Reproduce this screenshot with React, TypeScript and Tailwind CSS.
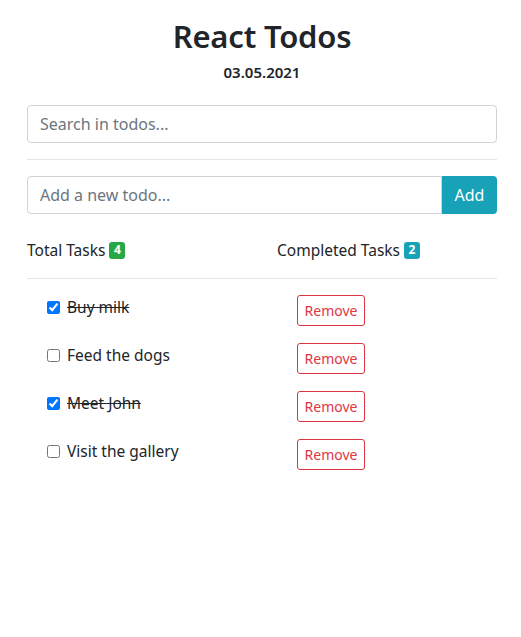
import React from "react";

const todos = [
  { text: "Buy milk", done: true },
  { text: "Feed the dogs", done: false },
  { text: "Meet John", done: true },
  { text: "Visit the gallery", done: false },
];

export default function App() {
  return (
    <div
      className="w-[521px] min-h-[637px] bg-white text-[#212529]"
      style={{ fontFamily: '"Noto Sans", "Open Sans", sans-serif' }}
    >
      <div className="ml-[27px] w-[470px] pt-[17px]">
        <h1 className="text-center text-[31px] leading-[38px] font-semibold tracking-[-0.2px]">React Todos</h1>
        <div className="mt-[5px] text-center text-[15px] leading-[24px] font-semibold">03.05.2021</div>

        <input
          className="mt-[21px] block w-full h-[38px] px-3 text-[16px] border border-[#ced4da] rounded-[4px] placeholder:text-[#6c757d] outline-none"
          placeholder="Search in todos..."
        />
        <hr className="my-4 border-t border-[#e5e5e5]" />
        <div className="flex h-[38px]">
          <input
            className="flex-1 min-w-0 h-full px-3 text-[16px] border border-[#ced4da] rounded-l-[4px] placeholder:text-[#6c757d] outline-none"
            placeholder="Add a new todo..."
          />
          <button className="h-full w-[55px] bg-[#17a2b8] text-white text-[16px] rounded-r-[4px]">Add</button>
        </div>

        <div className="mt-6 grid grid-cols-2 gap-[30px] text-[15.5px] leading-[24px]">
          <div className="flex items-center">
            Total Tasks
            <span className="ml-[4px] inline-flex items-center justify-center h-[17px] px-[4.5px] rounded-[3px] bg-[#28a745] text-white text-[12px] font-bold leading-none">4</span>
          </div>
          <div className="flex items-center">
            Completed Tasks
            <span className="ml-[4px] inline-flex items-center justify-center h-[17px] px-[4.5px] rounded-[3px] bg-[#17a2b8] text-white text-[12px] font-bold leading-none">2</span>
          </div>
        </div>
        <hr className="mt-4 mb-[7px] border-t border-[#e5e5e5]" />

        <ul>
          {todos.map((t) => (
            <li key={t.text} className="grid grid-cols-2 gap-[30px] h-12 items-center">
              <label className="flex items-center pl-5 mb-[6px] text-[15.5px] leading-[24px]">
                <input type="checkbox" defaultChecked={t.done} className="m-0 mr-[7px] w-[13px] h-[13px]" />
                <span className={t.done ? "line-through" : ""}>{t.text}</span>
              </label>
              <div className="pl-5">
                <button className="h-[31px] w-[68px] border border-[#dc3545] text-[#dc3545] text-[14px] rounded-[3px]">Remove</button>
              </div>
            </li>
          ))}
        </ul>
      </div>
    </div>
  );
}
